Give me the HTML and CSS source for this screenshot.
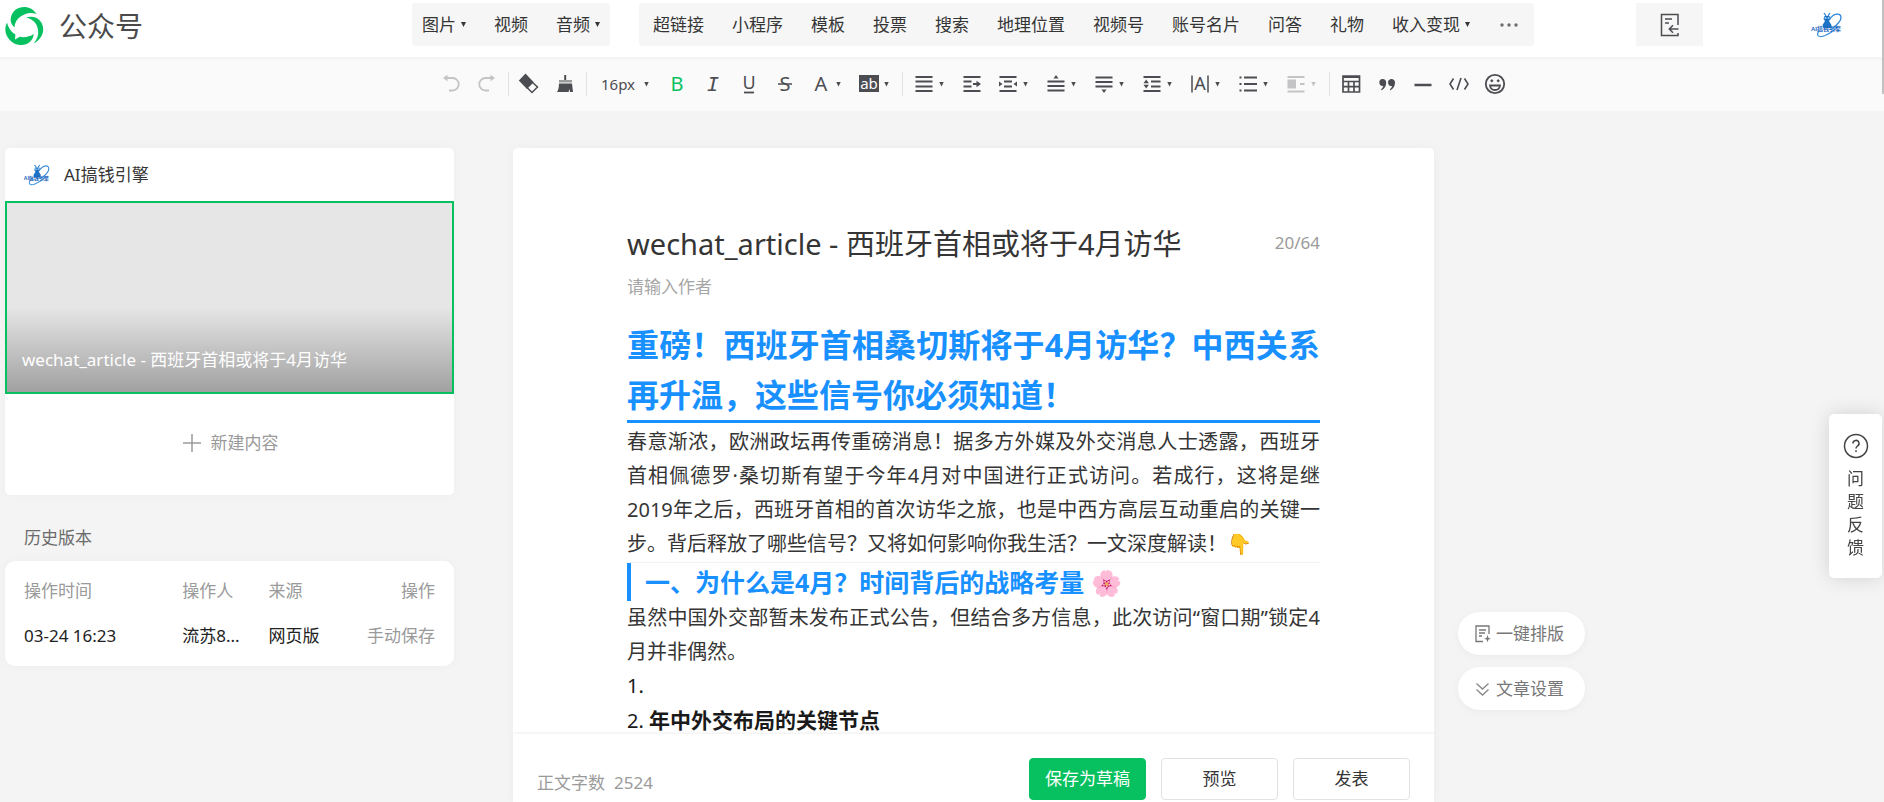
FILE: index.html
```html
<!DOCTYPE html>
<html lang="zh-CN">
<head>
<meta charset="utf-8">
<title>公众号</title>
<link rel="stylesheet" href="styles.css">
</head>
<body>
<header class="topbar">
  <div class="brand">
    <svg class="brand-logo" width="40" height="40" viewBox="5 6 40 40" fill="#07c160" aria-hidden="true">
      <path d="M14.600 27.300C11.500 25 10 21.500 11 17 12.500 10.500 18 7 24 7c5 0 10 2.500 12.400 7-4-1.300-8-1.300-11.500.3C19.500 16.500 14.800 20.500 14.600 27.300z"/>
      <path d="M26 17.500c6-2 12-.2 15 4.500 4.200 6.800 2.600 16-7.200 21.500 2.200-3.400 4.400-6 4.400-11C38.200 25 34 19 26 17.500z"/>
      <path d="M7 22.500c-2.300 5-2.300 10.500.8 15C11 42.500 16 45 21.500 45c6.500 0 11.700-4.500 12.300-11-4 2.800-9.500 3.800-14 2.800L15 39.500l.4-5C11.500 32 8.500 28.500 7 22.500z"/>
    </svg>
    <span class="brand-name">公众号</span>
  </div>
  <nav class="menus">
    <div class="menu menu-media">
      <button class="menu-item">图片<i class="caret"></i></button>
      <button class="menu-item">视频</button>
      <button class="menu-item">音频<i class="caret"></i></button>
    </div>
    <div class="menu">
      <button class="menu-item">超链接</button>
      <button class="menu-item">小程序</button>
      <button class="menu-item">模板</button>
      <button class="menu-item">投票</button>
      <button class="menu-item">搜索</button>
      <button class="menu-item">地理位置</button>
      <button class="menu-item">视频号</button>
      <button class="menu-item">账号名片</button>
      <button class="menu-item">问答</button>
      <button class="menu-item">礼物</button>
      <button class="menu-item">收入变现<i class="caret"></i></button>
      <button class="menu-item more" aria-label="更多"><svg width="20" height="4" viewBox="0 0 20 4" fill="#6b6c70"><circle cx="3" cy="2" r="1.700"/><circle cx="10" cy="2" r="1.700"/><circle cx="17" cy="2" r="1.700"/></svg></button>
    </div>
  </nav>
  <div class="account">
    <button class="exit" aria-label="返回旧版">
      <svg width="20" height="24" viewBox="0 0 20 24" fill="none" stroke="#4c4d52" stroke-width="1.500"><path d="M18 12V1.500H1.500v21H18V20M5 6h7M5 10h4M18.500 16H9.500M13 12.300L9.300 16l3.700 3.700"/></svg>
    </button>
    <svg class="avatar" width="36" height="26" viewBox="0 0 36 26">
      <g fill="none" stroke="#2f86d8" stroke-width="1.300">
        <path d="M20 7C23 1.500 31 0 31 5.500c0 5-6 9-10 12"/>
        <path d="M9 19c-4 5 1 7 6 4.500 5-2 9-5 13-9" stroke="#4b9be3"/>
        <path d="M14 1l2 3M20 1l-2 3"/>
      </g>
      <path d="M14.500 4h5l1 3-1.500 2 2.500 4-1 3h-7l-1-3 2.500-4-1.500-2z" fill="#1c72c4"/>
      <circle cx="15.500" cy="6" r="1" fill="#9fd0f5"/><circle cx="18.500" cy="6" r="1" fill="#9fd0f5"/>
      <text x="1" y="19" class="avatar-text">AI搞钱引擎</text>
    </svg>
  </div>
</header>

<div class="toolbar" role="toolbar">
  <button class="tool off" aria-label="撤销"><svg class="ic" viewBox="0 0 20 20"><path d="M5 4h6.500a6 6 0 0 1 0 12.500H8"/><path d="M6.500.8L2 4l4.500 3.200z" fill="currentColor" stroke="none"/></svg></button>
  <button class="tool off" aria-label="重做"><svg class="ic" viewBox="0 0 20 20"><path d="M15 4H8.500a6 6 0 0 0 0 12.500H12"/><path d="M13.500.8L18 4l-4.500 3.200z" fill="currentColor" stroke="none"/></svg></button>
  <i class="rule"></i>
  <button class="tool" aria-label="清除格式"><svg class="ic" viewBox="0 0 20 20"><path d="M1 6.500L6.500.8l7 7.500-5.500 5.500z" fill="currentColor"/><path d="M13 8l5.500 5-5.500 5.500-5.500-5.500" stroke-width="1.500"/></svg></button>
  <button class="tool" aria-label="格式刷"><svg class="ic" viewBox="0 0 20 20" fill="currentColor" stroke="none"><path d="M9.200 1h2v5h-2z"/><path d="M4 6h13v2.500H4z" opacity=".55"/><path d="M4 9.500h13L18 18h-3l-.5-3-1 3H2c1.500-2 2-5 2-8.500z"/></svg></button>
  <i class="rule"></i>
  <button class="tool size">16px<i class="caret"></i></button>
  <button class="tool on" aria-label="加粗"><svg class="ic" viewBox="0 0 20 20"><text class="letter" x="10" y="17" text-anchor="middle">B</text></svg></button>
  <button class="tool" aria-label="斜体"><svg class="ic" viewBox="0 0 20 20"><text class="letter slant" x="10" y="17" text-anchor="middle">I</text></svg></button>
  <button class="tool" aria-label="下划线"><svg class="ic" viewBox="0 0 20 20"><text class="letter small" x="10" y="15" text-anchor="middle">U</text><path d="M5 18.500h10"/></svg></button>
  <button class="tool" aria-label="删除线"><svg class="ic" viewBox="0 0 20 20"><text class="letter" x="10" y="17" text-anchor="middle">S</text><path d="M3 10h14" stroke-width="1.500"/></svg></button>
  <button class="tool drop" aria-label="字体颜色"><svg class="ic" viewBox="0 0 20 20"><text class="letter" x="10" y="17" text-anchor="middle">A</text></svg><i class="caret"></i></button>
  <button class="tool drop" aria-label="背景色"><svg class="ic" viewBox="0 0 20 20"><path d="M0 1h20v17H0z" fill="currentColor" stroke="none"/><text class="ab" x="10" y="15" text-anchor="middle">ab</text></svg><i class="caret"></i></button>
  <i class="rule wide"></i>
  <button class="tool drop" aria-label="对齐"><svg class="ic" viewBox="0 0 20 20"><path d="M1.500 3h17M1.500 7.500h17M1.500 12.500h17M1.500 17h17"/></svg><i class="caret"></i></button>
  <button class="tool" aria-label="首行缩进"><svg class="ic" viewBox="0 0 20 20"><path d="M1.500 3h17M1.500 7.500h8M1.500 12.500h8M1.500 17h17M11 10h5"/><path d="M14.500 6.800L19 10l-4.500 3.200z" fill="currentColor" stroke="none"/></svg></button>
  <button class="tool drop" aria-label="两端缩进"><svg class="ic" viewBox="0 0 20 20"><path d="M1.500 3h17M6 7.500h8M6 12.500h8M1.500 17h17"/><path d="M1 7.500v5L4.500 10zM19 7.500v5L15.500 10z" fill="currentColor" stroke="none"/></svg><i class="caret"></i></button>
  <button class="tool drop" aria-label="段前距"><svg class="ic" viewBox="0 0 20 20"><path d="M1.500 7.500h17M1.500 12h17M1.500 16.500h17"/><path d="M7.500 4.500L10 1l2.500 3.500z" fill="currentColor" stroke="none"/></svg><i class="caret"></i></button>
  <button class="tool drop" aria-label="段后距"><svg class="ic" viewBox="0 0 20 20"><path d="M1.500 3.500h17M1.500 8h17M1.500 12.500h17"/><path d="M7.500 15.500L10 19l2.500-3.500z" fill="currentColor" stroke="none"/></svg><i class="caret"></i></button>
  <button class="tool drop" aria-label="行间距"><svg class="ic" viewBox="0 0 20 20"><path d="M1.500 3h17M9 7.500h9.500M9 12.500h9.500M1.500 17h17"/><path d="M1.500 9.200L4.200 5.500l2.700 3.700zM1.500 10.800l2.700 3.700 2.700-3.700z" fill="currentColor" stroke="none"/></svg><i class="caret"></i></button>
  <button class="tool drop" aria-label="字间距"><svg class="ic" viewBox="0 0 20 20"><path d="M2 1.500v17M18 1.500v17" stroke-width="1.500"/><text class="letter small" x="10" y="16" text-anchor="middle">A</text></svg><i class="caret"></i></button>
  <button class="tool drop" aria-label="列表"><svg class="ic" viewBox="0 0 20 20"><path d="M6 3.500h13M6 10h13M6 16.500h13"/><path d="M1.500 3.500h2M1.500 10h2M1.500 16.500h2"/></svg><i class="caret"></i></button>
  <button class="tool drop off" aria-label="图文混排"><svg class="ic" viewBox="0 0 20 20"><path d="M1.500 3h17M14 10h4.500M1.500 17.500h17"/><path d="M1.500 5.500H10v9H1.500z" fill="currentColor" stroke="none"/></svg><i class="caret"></i></button>
  <i class="rule wide"></i>
  <button class="tool" aria-label="表格"><svg class="ic" viewBox="0 0 20 20"><path d="M2 2h16.500v16H2zM2 7.500h16.500M2 12.700h16.500M7.500 7.500V18M13 7.500V18" stroke-width="1.700"/><path d="M2 2h16.500v2H2z" fill="currentColor" stroke="none"/></svg></button>
  <button class="tool" aria-label="引用"><svg class="ic" viewBox="0 0 20 20" fill="currentColor" stroke="none"><path d="M5.500 5a3.500 3.500 0 0 1 3.700 3.800c0 3-1.500 5.700-4.400 7.400l-.8-.8c1.300-1 2-2.200 2.200-3.400A3.500 3.500 0 0 1 5.500 5zM14.200 5A3.500 3.500 0 0 1 18 8.800c0 3-1.500 5.700-4.400 7.400l-.8-.8c1.300-1 2-2.200 2.200-3.400A3.500 3.500 0 0 1 14.200 5z"/></svg></button>
  <button class="tool" aria-label="分隔线"><svg class="ic" viewBox="0 0 20 20"><path d="M1.500 11h17" stroke-width="2.500"/></svg></button>
  <button class="tool" aria-label="代码"><svg class="ic" viewBox="0 0 20 20"><path d="M4.500 4.500L1 10l3.500 5.500M15.500 4.500L19 10l-3.500 5.500M12 4l-4 12" stroke-width="1.600"/></svg></button>
  <button class="tool" aria-label="表情"><svg class="ic" viewBox="0 0 20 20" stroke-width="1.500"><circle cx="10" cy="10" r="9.200"/><path d="M5 11.500h10c-.4 3-2.400 4.500-5 4.500s-4.600-1.500-5-4.500z"/><circle cx="6.800" cy="6.800" r="1" fill="currentColor" stroke-width="1"/><circle cx="13.200" cy="6.800" r="1" fill="currentColor" stroke-width="1"/></svg></button>
</div>

<main class="workspace">
  <aside class="side">
    <section class="panel">
      <div class="panel-head">
        <svg class="avatar" width="30" height="22" viewBox="0 0 36 26">
          <g fill="none" stroke="#2f86d8" stroke-width="1.300">
            <path d="M20 7C23 1.500 31 0 31 5.500c0 5-6 9-10 12"/>
            <path d="M9 19c-4 5 1 7 6 4.500 5-2 9-5 13-9" stroke="#4b9be3"/>
            <path d="M14 1l2 3M20 1l-2 3"/>
          </g>
          <path d="M14.500 4h5l1 3-1.500 2 2.500 4-1 3h-7l-1-3 2.500-4-1.500-2z" fill="#1c72c4"/>
          <circle cx="15.500" cy="6" r="1" fill="#9fd0f5"/><circle cx="18.500" cy="6" r="1" fill="#9fd0f5"/>
          <text x="1" y="19" class="avatar-text">AI搞钱引擎</text>
        </svg>
        <span>AI搞钱引擎</span>
      </div>
      <div class="cover"><div class="cover-title">wechat_article - 西班牙首相或将于4月访华</div></div>
      <button class="add">
        <svg width="18" height="18" viewBox="0 0 18 18" stroke="#9a9a9a" stroke-width="1.500"><path d="M9 0v18M0 9h18"/></svg>
        <span>新建内容</span>
      </button>
    </section>
    <h2 class="history-title">历史版本</h2>
    <section class="history">
      <table class="history-table">
        <thead><tr><th class="col-time">操作时间</th><th class="col-user">操作人</th><th>来源</th><th class="col-act">操作</th></tr></thead>
        <tbody><tr><td>03-24 16:23</td><td>流苏8...</td><td>网页版</td><td class="col-act muted">手动保存</td></tr></tbody>
      </table>
    </section>
  </aside>

  <section class="center">
    <div class="sheet">
      <article class="article">
        <div class="title-row">
          <input class="title" aria-label="标题" value="wechat_article - 西班牙首相或将于4月访华">
          <span class="count">20/64</span>
        </div>
        <input class="author" aria-label="作者" placeholder="请输入作者">
        <div class="content">
          <h1>重磅！西班牙首相桑切斯将于4月访华？中西关系再升温，这些信号你必须知道！</h1>
          <p>春意渐浓，欧洲政坛再传重磅消息！据多方外媒及外交消息人士透露，西班牙首相佩德罗·桑切斯有望于今年4月对中国进行正式访问。若成行，这将是继2019年之后，西班牙首相的首次访华之旅，也是中西方高层互动重启的关键一步。背后释放了哪些信号？又将如何影响你我生活？一文深度解读！👇</p>
          <h2>一、为什么是4月？时间背后的战略考量 🌸</h2>
          <p>虽然中国外交部暂未发布正式公告，但结合多方信息，此次访问“窗口期”锁定4月并非偶然。</p>
          <ol>
            <li></li>
            <li><strong>年中外交布局的关键节点</strong></li>
          </ol>
        </div>
      </article>
      <footer class="actions">
        <div class="words"><span>正文字数</span><span>2524</span></div>
        <button class="btn primary">保存为草稿</button>
        <button class="btn">预览</button>
        <button class="btn">发表</button>
      </footer>
    </div>
  </section>

  <aside class="pills">
    <button class="pill"><svg width="16" height="18" viewBox="0 0 16 18" fill="none" stroke="#777" stroke-width="1.300"><path d="M14 9V1H1v15.500h7M4 5h7M4 8h6M4 11h3"/><path d="M12.500 10l1 3 2.500.8-2.500.8-1 2.700-1-2.700-2.500-.8 2.500-.8z" fill="#777" stroke="none"/></svg><span>一键排版</span></button>
    <button class="pill"><svg width="16" height="18" viewBox="0 0 16 18" fill="none" stroke="#888" stroke-width="1.300"><path d="M1.500 3.500L7.500 9l6-5.500M1.500 9.500l6 5.500 6-5.500"/></svg><span>文章设置</span></button>
  </aside>
</main>

<button class="feedback">
  <svg width="26" height="26" viewBox="0 0 26 26" fill="none" stroke="#444" stroke-width="1.500"><circle cx="13" cy="13" r="11.500"/><path d="M10 10.500a3 3 0 1 1 4.500 2.500c-1 .7-1.500 1.200-1.500 2.500M13 17.300v1.700"/></svg>
  <span>问题反馈</span>
</button>
<div class="thumb"></div>
</body>
</html>
```

FILE: styles.css
```css
* { box-sizing: border-box; }

body {
  margin: 0;
  height: 100vh;
  display: flex;
  flex-direction: column;
  overflow: hidden;
  background: #f4f4f4;
  color: #353535;
  font: 17px/24px "Noto Sans", "Noto Sans CJK SC", sans-serif;
}

button, input {
  font: inherit;
  color: inherit;
  border: 0;
  padding: 0;
  background: none;
}

button { cursor: pointer; }

.avatar { overflow: visible; }

.avatar-text {
  font: bold 6px "Liberation Sans", "Noto Sans CJK SC", sans-serif;
  fill: #1c66bd;
}

.caret {
  width: 5px;
  height: 5px;
  background: currentColor;
  clip-path: polygon(0 0, 100% 0, 50% 100%);
}

/* Top bar */
.topbar {
  flex: none;
  display: grid;
  grid-template-columns: 412fr auto 350fr;
  height: 57px;
  padding-top: 3px;
  background: #fff;
}

.brand {
  display: flex;
  align-items: center;
  gap: 14px;
  height: 46px;
  padding-left: 5px;
}

.brand-name { font-size: 28px; color: #4a4a4a; }

.menus { display: flex; gap: 29px; height: 43px; }

.menu {
  display: flex;
  gap: 28px;
  padding: 0 14px;
  border-radius: 3px;
  background: #f6f6f6;
}

.menu-media { padding: 0 10px; }

.menu-item {
  display: flex;
  align-items: center;
  gap: 5px;
  white-space: nowrap;
}

.more { padding: 0 1px; }

.account {
  display: flex;
  align-items: center;
  justify-content: space-between;
  height: 43px;
  padding: 0 38px 0 102px;
}

.exit {
  display: grid;
  place-items: center;
  width: 67px;
  height: 43px;
  background: #f6f6f6;
}

/* Toolbar */
.toolbar {
  flex: none;
  display: flex;
  align-items: center;
  justify-content: center;
  height: 54px;
  padding-left: 62px;
  background: #fafafa;
  box-shadow: inset 0 4px 4px -3px #efefef;
  color: #4c4d52;
}

.tool {
  display: flex;
  align-items: center;
  gap: 5px;
  height: 36px;
  padding: 0 8px;
}

.tool.drop { padding-right: 10px; }
.tool.off { color: #c4c4c6; }
.tool.on { color: #07c160; }

.tool.size {
  width: 70px;
  padding: 0 10px 0 12px;
  justify-content: space-between;
  font-size: 15px;
}

.ic {
  width: 20px;
  height: 20px;
  fill: none;
  stroke: currentColor;
  stroke-width: 1.8px;
  overflow: visible;
}

.ic[fill] { fill: currentColor; stroke: none; }

.letter {
  font: 20px "Noto Sans", sans-serif;
  fill: currentColor;
  stroke: none;
}

.letter.small { font-size: 18px; }
.letter.slant { font-family: "DejaVu Sans Mono", monospace; font-style: italic; }

.ab {
  font: 15px "Noto Sans", sans-serif;
  fill: #fff;
  stroke: none;
}

.rule {
  width: 1px;
  height: 24px;
  margin: 0 2px 0 3px;
  background: #e2e2e2;
}

.rule.wide { margin: 0 3px; }

/* Workspace */
.workspace {
  flex: 1;
  min-height: 0;
  display: grid;
  grid-template-columns: minmax(0, 449fr) minmax(0, 956fr) minmax(0, 426fr);
  gap: 24px;
  padding: 37px 0 0 5px;
}

.panel {
  border-radius: 5px;
  background: #fff;
  box-shadow: 0 0 12px rgba(0, 0, 0, 0.03);
}

.panel-head {
  display: flex;
  align-items: center;
  gap: 11px;
  height: 53px;
  padding: 0 18px;
}

.cover {
  display: flex;
  align-items: flex-end;
  height: 193px;
  border: 2px solid #07c160;
  background: linear-gradient(transparent 55%, rgba(0, 0, 0, 0.3)) #e6e6e6;
}

.cover-title { padding: 20px 15px; color: #fff; }

.add {
  display: flex;
  align-items: center;
  justify-content: center;
  gap: 10px;
  width: 100%;
  height: 101px;
  padding: 0 0 4px 2px;
  color: #9a9a9a;
}

.history-title {
  margin: 31px 0 11px;
  padding-left: 19px;
  font-size: 17px;
  line-height: 24px;
  font-weight: 400;
  color: #6b6b6b;
}

.history {
  padding: 7px 19px 8px;
  border-radius: 10px;
  background: #fff;
  box-shadow: 0 0 12px rgba(0, 0, 0, 0.03);
}

.history-table {
  width: 100%;
  border-collapse: collapse;
  table-layout: fixed;
}

.history-table th, .history-table td {
  height: 45px;
  padding: 0;
  font-weight: 400;
  text-align: left;
  white-space: nowrap;
  color: #222;
}

.history-table th, .history-table .muted { color: #9a9a9a; }
.history-table .col-time { width: 38.5%; }
.history-table .col-user { width: 21%; }
.history-table .col-act { text-align: right; }

.center { min-height: 0; padding-left: 35px; }

.sheet {
  display: flex;
  flex-direction: column;
  height: 100%;
  border-radius: 5px 5px 0 0;
  background: #fff;
  box-shadow: 0 0 12px rgba(0, 0, 0, 0.04);
}

.article {
  flex: 1;
  min-height: 0;
  overflow: hidden;
  padding: 74px 114px 0;
}

.title-row { display: flex; align-items: center; }

.title {
  flex: 1;
  min-width: 0;
  height: 40px;
  font-size: 29px;
}

.count { padding-top: 2px; color: #9a9a9a; }

.author {
  display: block;
  width: 100%;
  height: 24px;
  margin: 13px 0 21px;
}

.author::placeholder { color: #a6a6a6; opacity: 1; }

.content { font-size: 20px; line-height: 34px; text-align: justify; }

.content h1 {
  margin: 0;
  border-bottom: 3px solid #1890ff;
  font-size: 32px;
  line-height: 50px;
  color: #1890ff;
}

.content p { margin: 0; }

.content h1 + p { padding-top: 2px; }

.content h2 {
  margin: 2px 0 0;
  padding-left: 14px;
  border-left: 4px solid #1890ff;
  box-shadow: 0 -1px #f2f2f2;
  font-size: 25px;
  line-height: 38px;
  color: #1890ff;
}

.content ol {
  margin: 0;
  padding: 0;
  list-style-position: inside;
  color: #1a1a1a;
}

.content strong { font-size: 21px; }

.actions {
  flex: none;
  display: flex;
  gap: 15px;
  padding: 24px 24px 2px;
  box-shadow: 0 -1px 3px #eee;
}

.words {
  flex: 1;
  display: flex;
  gap: 9px;
  padding-top: 13px;
  color: #9a9a9a;
}

.btn {
  width: 117px;
  height: 42px;
  border: 1px solid #e2e2e2;
  border-radius: 4px;
  background: #fff;
}

.btn.primary { border-color: #07c160; background: #07c160; color: #fff; }

/* Floating controls */
.pills {
  display: flex;
  flex-direction: column;
  align-items: flex-start;
  justify-content: flex-end;
  gap: 12px;
  padding-bottom: 92px;
}

.pill {
  display: flex;
  align-items: center;
  gap: 5px;
  height: 43px;
  padding: 0 21px 0 17px;
  border-radius: 22px;
  background: #fff;
  box-shadow: 0 2px 8px rgba(0, 0, 0, 0.04);
  color: #777;
}

.feedback {
  position: fixed;
  top: 414px;
  right: 2px;
  display: flex;
  flex-direction: column;
  align-items: center;
  gap: 8px;
  width: 53px;
  padding: 19px 18px;
  border-radius: 5px;
  background: #fff;
  box-shadow: 0 0 20px rgba(0, 0, 0, 0.14);
  line-height: 23px;
  color: #444;
}

.thumb {
  position: fixed;
  top: 0;
  right: 0;
  width: 2px;
  height: 94px;
  background: #c1c1c1;
}
```
